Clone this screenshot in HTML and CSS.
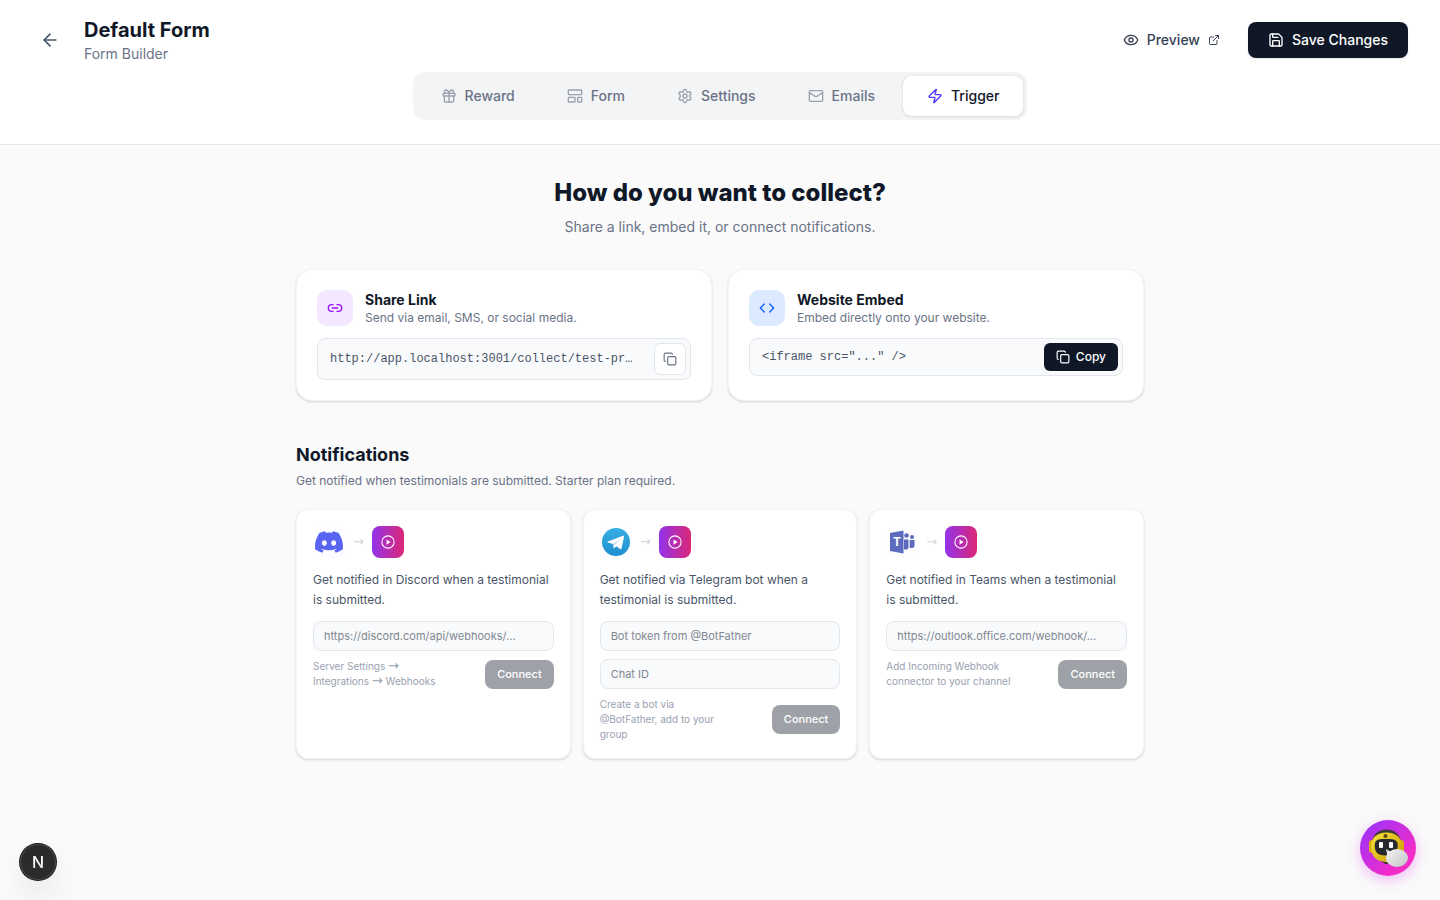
FILE: index.html
```html
<!DOCTYPE html>
<html lang="en">
<head>
    <meta charset="UTF-8">
    <meta name="viewport" content="width=device-width, initial-scale=1.0">
    <title>Default Form - Form Builder</title>
    <link rel="stylesheet" href="styles.css">
</head>
<body>
    <!-- shared icons -->
    <svg class="sprite" aria-hidden="true">
        <defs>
            <linearGradient id="telegram-bg" x1="0" y1="0" x2="0" y2="1">
                <stop offset="0" stop-color="#37aee2"/>
                <stop offset="1" stop-color="#1e8fd0"/>
            </linearGradient>
        </defs>
        <symbol id="icon-copy" viewBox="0 0 24 24">
            <rect width="14" height="14" x="8" y="8" rx="2"/>
            <path d="M4 16c-1.1 0-2-.9-2-2V4c0-1.1.9-2 2-2h10c1.1 0 2 .9 2 2"/>
        </symbol>
        <symbol id="icon-play" viewBox="0 0 24 24">
            <circle cx="12" cy="12" r="10.5" stroke-width="1.8"/>
            <path d="M9.5 7.5v9l7-4.5z" fill="currentColor" stroke="none"/>
        </symbol>
    </svg>

    <header class="header">
        <div class="header-row">
            <div class="header-left">
                <a href="#" class="back-btn" aria-label="Back">
                    <svg class="icon icon-20" viewBox="0 0 24 24"><path d="m12 19-7-7 7-7"/><path d="M19 12H5"/></svg>
                </a>
                <div>
                    <h1 class="page-title">Default Form</h1>
                    <p class="page-subtitle">Form Builder</p>
                </div>
            </div>
            <div class="header-right">
                <a href="#" class="preview-btn">
                    <svg class="icon icon-16" viewBox="0 0 24 24"><path d="M2.062 12.348a1 1 0 0 1 0-.696 10.75 10.75 0 0 1 19.876 0 1 1 0 0 1 0 .696 10.75 10.75 0 0 1-19.876 0"/><circle cx="12" cy="12" r="3"/></svg>
                    Preview
                    <svg class="icon icon-12" viewBox="0 0 24 24"><path d="M15 3h6v6"/><path d="M10 14 21 3"/><path d="M18 13v6a2 2 0 0 1-2 2H5a2 2 0 0 1-2-2V8a2 2 0 0 1 2-2h6"/></svg>
                </a>
                <button type="button" class="save-btn">
                    <svg class="icon icon-16" viewBox="0 0 24 24"><path d="M15.2 3a2 2 0 0 1 1.4.6l3.8 3.8a2 2 0 0 1 .6 1.4V19a2 2 0 0 1-2 2H5a2 2 0 0 1-2-2V5a2 2 0 0 1 2-2z"/><path d="M17 21v-7a1 1 0 0 0-1-1H8a1 1 0 0 0-1 1v7"/><path d="M7 3v4a1 1 0 0 0 1 1h7"/></svg>
                    Save Changes
                </button>
            </div>
        </div>

        <nav class="tabs">
            <button type="button" class="tab">
                <svg class="icon icon-16" viewBox="0 0 24 24"><rect x="3" y="8" width="18" height="4" rx="1"/><path d="M12 8v13"/><path d="M19 12v7a2 2 0 0 1-2 2H7a2 2 0 0 1-2-2v-7"/><path d="M7.5 8a2.5 2.5 0 0 1 0-5A4.8 8 0 0 1 12 8a4.8 8 0 0 1 4.5-5 2.5 2.5 0 0 1 0 5"/></svg>
                Reward
            </button>
            <button type="button" class="tab">
                <svg class="icon icon-16" viewBox="0 0 24 24"><rect x="2" y="3" width="20" height="7" rx="1"/><rect x="2" y="14" width="10" height="7" rx="1"/><rect x="16" y="14" width="6" height="7" rx="1"/></svg>
                Form
            </button>
            <button type="button" class="tab">
                <svg class="icon icon-16" viewBox="0 0 24 24"><path d="M12.22 2h-.44a2 2 0 0 0-2 2v.18a2 2 0 0 1-1 1.73l-.43.25a2 2 0 0 1-2 0l-.15-.08a2 2 0 0 0-2.73.73l-.22.38a2 2 0 0 0 .73 2.73l.15.1a2 2 0 0 1 1 1.72v.51a2 2 0 0 1-1 1.74l-.15.09a2 2 0 0 0-.73 2.73l.22.38a2 2 0 0 0 2.73.73l.15-.08a2 2 0 0 1 2 0l.43.25a2 2 0 0 1 1 1.73V20a2 2 0 0 0 2 2h.44a2 2 0 0 0 2-2v-.18a2 2 0 0 1 1-1.73l.43-.25a2 2 0 0 1 2 0l.15.08a2 2 0 0 0 2.73-.73l.22-.39a2 2 0 0 0-.73-2.73l-.15-.08a2 2 0 0 1-1-1.74v-.5a2 2 0 0 1 1-1.74l.15-.09a2 2 0 0 0 .73-2.73l-.22-.38a2 2 0 0 0-2.73-.73l-.15.08a2 2 0 0 1-2 0l-.43-.25a2 2 0 0 1-1-1.73V4a2 2 0 0 0-2-2z"/><circle cx="12" cy="12" r="3"/></svg>
                Settings
            </button>
            <button type="button" class="tab">
                <svg class="icon icon-16" viewBox="0 0 24 24"><rect x="2" y="4" width="20" height="16" rx="2"/><path d="m22 7-8.991 5.727a2 2 0 0 1-2.009 0L2 7"/></svg>
                Emails
            </button>
            <button type="button" class="tab active">
                <svg class="icon icon-16" viewBox="0 0 24 24"><path d="M4 14a1 1 0 0 1-.78-1.63l9.9-10.2a.5.5 0 0 1 .86.46l-1.92 6.02A1 1 0 0 0 13 10h7a1 1 0 0 1 .78 1.63l-9.9 10.2a.5.5 0 0 1-.86-.46l1.92-6.02A1 1 0 0 0 11 14z"/></svg>
                Trigger
            </button>
        </nav>
    </header>

    <main class="container">
        <div class="intro">
            <h2 class="intro-title">How do you want to collect?</h2>
            <p class="intro-text">Share a link, embed it, or connect notifications.</p>
        </div>

        <section class="collect-grid">
            <div class="collect-card">
                <div class="collect-head">
                    <span class="collect-icon purple">
                        <svg class="icon icon-16" viewBox="0 0 24 24"><path d="M9 17H7A5 5 0 0 1 7 7h2"/><path d="M15 7h2a5 5 0 1 1 0 10h-2"/><path d="M8 12h8"/></svg>
                    </span>
                    <div>
                        <h3 class="collect-title">Share Link</h3>
                        <p class="collect-text">Send via email, SMS, or social media.</p>
                    </div>
                </div>
                <div class="code-box">
                    <code>http://app.localhost:3001/collect/test-pr…</code>
                    <button type="button" class="copy-icon-btn" aria-label="Copy link">
                        <svg class="icon icon-14"><use href="#icon-copy"/></svg>
                    </button>
                </div>
            </div>

            <div class="collect-card">
                <div class="collect-head">
                    <span class="collect-icon blue">
                        <svg class="icon icon-16" viewBox="0 0 24 24"><path d="m16 18 6-6-6-6"/><path d="m8 6-6 6 6 6"/></svg>
                    </span>
                    <div>
                        <h3 class="collect-title">Website Embed</h3>
                        <p class="collect-text">Embed directly onto your website.</p>
                    </div>
                </div>
                <div class="code-box">
                    <code>&lt;iframe src="..." /&gt;</code>
                    <button type="button" class="copy-btn">
                        <svg class="icon icon-14"><use href="#icon-copy"/></svg>
                        Copy
                    </button>
                </div>
            </div>
        </section>

        <section class="notifications">
            <h2 class="section-title">Notifications</h2>
            <p class="section-text">Get notified when testimonials are submitted. Starter plan required.</p>

            <div class="notify-grid">
                <form class="notify-card">
                    <div class="logos">
                        <span class="logo">
                            <svg class="icon-28" viewBox="0 0 24 24" fill="#5865f2"><path d="M20.317 4.37a19.79 19.79 0 0 0-4.885-1.515.074.074 0 0 0-.079.037c-.21.375-.444.865-.608 1.25a18.27 18.27 0 0 0-5.487 0 12.64 12.64 0 0 0-.617-1.25.077.077 0 0 0-.079-.037A19.74 19.74 0 0 0 3.677 4.37a.07.07 0 0 0-.032.027C.533 9.046-.32 13.58.099 18.057a.082.082 0 0 0 .031.057 19.9 19.9 0 0 0 5.993 3.03.078.078 0 0 0 .084-.028c.462-.63.874-1.295 1.226-1.994a.076.076 0 0 0-.041-.106 13.1 13.1 0 0 1-1.872-.892.077.077 0 0 1-.008-.128c.126-.094.252-.192.372-.292a.074.074 0 0 1 .077-.01c3.928 1.793 8.18 1.793 12.062 0a.074.074 0 0 1 .078.01c.12.098.246.198.373.292a.077.077 0 0 1-.006.127 12.3 12.3 0 0 1-1.873.892.077.077 0 0 0-.041.107c.36.698.772 1.362 1.225 1.993a.076.076 0 0 0 .084.028 19.84 19.84 0 0 0 6.002-3.03.077.077 0 0 0 .032-.054c.5-5.177-.838-9.674-3.549-13.66a.061.061 0 0 0-.031-.03zM8.02 15.33c-1.183 0-2.157-1.085-2.157-2.419 0-1.333.956-2.419 2.157-2.419 1.21 0 2.176 1.096 2.157 2.42 0 1.333-.956 2.418-2.157 2.418zm7.975 0c-1.183 0-2.157-1.085-2.157-2.419 0-1.333.955-2.419 2.157-2.419 1.21 0 2.176 1.096 2.157 2.42 0 1.333-.946 2.418-2.157 2.418z"/></svg>
                        </span>
                        <span class="arrow">→</span>
                        <span class="app-logo"><svg class="icon icon-14"><use href="#icon-play"/></svg></span>
                    </div>
                    <p class="notify-text">Get notified in Discord when a testimonial is submitted.</p>
                    <div class="fields">
                        <input type="url" class="field" aria-label="Discord webhook URL" placeholder="https://discord.com/api/webhooks/...">
                        <div class="notify-foot">
                            <p class="hint">Server Settings <span class="hint-arrow">→</span> Integrations <span class="hint-arrow">→</span> Webhooks</p>
                            <button type="button" class="connect-btn" disabled>Connect</button>
                        </div>
                    </div>
                </form>

                <form class="notify-card">
                    <div class="logos">
                        <span class="logo">
                            <svg class="icon-28" viewBox="0 0 28 28">
                                <circle cx="14" cy="14" r="14" fill="url(#telegram-bg)"/>
                                <path d="M5.8 13.5 21 7.7c.7-.2 1.2.2 1 1.1l-2.5 11.7c-.2.8-.7 1-1.4.6l-3.8-2.9-1.9 1.9c-.5.4-.9.3-.9-.5l-.6-3.7-5-1.5c-.8-.3-.8-.7-.1-.9z" fill="#fff"/>
                                <path d="m10.9 15.9 8.4-5.5-6.7 6.7-.7 3.2z" fill="#c8daea"/>
                            </svg>
                        </span>
                        <span class="arrow">→</span>
                        <span class="app-logo"><svg class="icon icon-14"><use href="#icon-play"/></svg></span>
                    </div>
                    <p class="notify-text">Get notified via Telegram bot when a testimonial is submitted.</p>
                    <div class="fields">
                        <input type="text" class="field" aria-label="Bot token" placeholder="Bot token from @BotFather">
                        <input type="text" class="field" aria-label="Chat ID" placeholder="Chat ID">
                        <div class="notify-foot">
                            <p class="hint">Create a bot via @BotFather, add to your group</p>
                            <button type="button" class="connect-btn" disabled>Connect</button>
                        </div>
                    </div>
                </form>

                <form class="notify-card">
                    <div class="logos">
                        <span class="logo">
                            <svg class="icon-28" viewBox="0 0 28 28">
                                <g fill="#5c6bc0">
                                    <circle cx="18.5" cy="7.5" r="2.3"/>
                                    <circle cx="24" cy="9" r="2"/>
                                    <path d="M16 11.5h4.5V19a2.5 2.5 0 0 1-2.5 2.5h-2z"/>
                                    <path d="M21.7 12h4.8v5.5a2.6 2.6 0 0 1-2.8 2.5h-2z"/>
                                    <path d="M2 5 15.5 2.5v23L2 23z"/>
                                </g>
                                <text class="teams-letter" x="9" y="18" text-anchor="middle">T</text>
                            </svg>
                        </span>
                        <span class="arrow">→</span>
                        <span class="app-logo"><svg class="icon icon-14"><use href="#icon-play"/></svg></span>
                    </div>
                    <p class="notify-text">Get notified in Teams when a testimonial is submitted.</p>
                    <div class="fields">
                        <input type="url" class="field" aria-label="Teams webhook URL" placeholder="https://outlook.office.com/webhook/...">
                        <div class="notify-foot">
                            <p class="hint">Add Incoming Webhook connector to your channel</p>
                            <button type="button" class="connect-btn" disabled>Connect</button>
                        </div>
                    </div>
                </form>
            </div>
        </section>
    </main>

    <button type="button" class="dev-badge" aria-label="Developer tools">
        <svg viewBox="0 0 36 36">
            <defs>
                <linearGradient id="dev-fade" x1="0" y1="0" x2="0" y2="1">
                    <stop offset=".5" stop-color="#fff"/>
                    <stop offset="1" stop-color="#ccc"/>
                </linearGradient>
            </defs>
            <text class="dev-letter" x="18" y="24" text-anchor="middle" fill="url(#dev-fade)">N</text>
        </svg>
    </button>

    <button type="button" class="chat-btn" aria-label="Open chat">
        <svg viewBox="0 0 56 56">
            <defs>
                <linearGradient id="bot-head" x1="0" y1="0" x2="1" y2="1">
                    <stop offset="0" stop-color="#f8e33a"/>
                    <stop offset="1" stop-color="#c99a08"/>
                </linearGradient>
                <linearGradient id="bot-bubble" x1="0" y1="0" x2="1" y2="1">
                    <stop offset="0" stop-color="#f4f4f4"/>
                    <stop offset="1" stop-color="#c4c4c8"/>
                </linearGradient>
            </defs>
            <path d="M12 22c1-8 7-12.5 14.5-12.5S40 14 41 22z" fill="#3d3b36"/>
            <rect x="9" y="20" width="6" height="13" rx="3" fill="#d9a90c"/>
            <rect x="38" y="20" width="6" height="13" rx="3" fill="#d9a90c"/>
            <path d="M11 26c0-8 6-13.5 15.5-13.5S42 18 42 26c0 9-4 16-15.5 16S11 35 11 26z" fill="url(#bot-head)"/>
            <path d="M20 40c4 3 9 3 13 0l-5 4h-3z" fill="#3d3b36"/>
            <circle cx="25.5" cy="16" r="2" fill="#5a4a1a"/>
            <path d="M15 23c1-4 5-4 11-4s10 0 11.5 4c1 8-2 12.5-11.5 12.5S14 31 15 23z" fill="#292a30"/>
            <rect x="19" y="22" width="4" height="6" rx="1" fill="#fff"/>
            <rect x="29" y="22" width="4" height="6" rx="1" fill="#fff"/>
            <path d="m26 29 5 3-3 6z" fill="#eee"/>
            <ellipse cx="37" cy="38" rx="11" ry="9" fill="url(#bot-bubble)"/>
        </svg>
    </button>
</body>
</html>
```

FILE: styles.css
```css
* {
    box-sizing: border-box;
    margin: 0;
    padding: 0;
}
body {
    min-height: 100vh;
    background: #fafafa;
    color: #101828;
    font-family: Inter, 'Liberation Sans', sans-serif;
    font-size: 14px;
    line-height: 20px;
}
button, input {
    font: inherit;
}
button {
    border: none;
    cursor: pointer;
}
a {
    color: inherit;
    text-decoration: none;
}
.sprite {
    position: absolute;
    width: 0;
    height: 0;
}

/* icons */
.icon {
    flex-shrink: 0;
    fill: none;
    stroke: currentColor;
    stroke-width: 2;
    stroke-linecap: round;
    stroke-linejoin: round;
}
.icon-12 {
    width: 12px;
    height: 12px;
}
.icon-14 {
    width: 14px;
    height: 14px;
}
.icon-16 {
    width: 16px;
    height: 16px;
}
.icon-20 {
    width: 20px;
    height: 20px;
}
.icon-28 {
    width: 28px;
    height: 28px;
}

/* header */
.header {
    display: flex;
    flex-direction: column;
    gap: 8px;
    padding: 16px 32px 24px;
    background: #fff;
    border-bottom: 1px solid #e5e7eb;
}
.header-row {
    display: flex;
    justify-content: space-between;
    align-items: center;
}
.header-left {
    display: flex;
    align-items: center;
    gap: 16px;
}
.back-btn {
    display: flex;
    padding: 8px;
    color: #4a5568;
}
.page-title {
    font-size: 20px;
    line-height: 28px;
    font-weight: 700;
}
.page-subtitle {
    color: #6a7386;
}
.header-right {
    display: flex;
    align-items: center;
    gap: 12px;
}
.preview-btn {
    display: flex;
    align-items: center;
    gap: 8px;
    padding: 8px 16px;
    color: #364153;
    font-weight: 500;
}
.save-btn {
    display: flex;
    align-items: center;
    gap: 8px;
    padding: 8px 20px;
    border-radius: 8px;
    background: #101828;
    color: #fff;
    font-weight: 500;
    box-shadow: 0 1px 2px rgba(0, 0, 0, 0.1);
}

/* tabs */
.tabs {
    display: flex;
    gap: 4px;
    align-self: center;
    padding: 4px;
    border-radius: 12px;
    background: #f3f4f6;
}
.tab {
    display: flex;
    align-items: center;
    gap: 8px;
    padding: 10px 24px;
    border-radius: 8px;
    background: transparent;
    color: #6a7386;
    font-weight: 500;
}
.tab .icon {
    color: #99a1af;
}
.tab.active {
    background: #fff;
    color: #101828;
    box-shadow: 0 1px 3px rgba(0, 0, 0, 0.1), 0 0 1px rgba(15, 23, 43, 0.2);
}
.tab.active .icon {
    color: #4f39f6;
}

.container {
    max-width: 896px;
    margin: 0 auto;
    padding: 32px 24px;
}
.intro {
    margin-bottom: 32px;
    text-align: center;
}
.intro-title {
    margin-bottom: 8px;
    font-size: 24px;
    line-height: 32px;
    font-weight: 800;
}
.intro-text {
    color: #6a7386;
}

/* collect cards */
.collect-grid {
    display: grid;
    grid-template-columns: 1fr 1fr;
    gap: 16px;
    margin-bottom: 40px;
}
.collect-card {
    padding: 20px;
    border: 1px solid #f3f4f6;
    border-radius: 16px;
    background: #fff;
    box-shadow: 0 1px 3px rgba(0, 0, 0, 0.1), 0 1px 2px rgba(0, 0, 0, 0.06);
}
.collect-head {
    display: flex;
    align-items: center;
    gap: 12px;
    margin-bottom: 12px;
}
.collect-icon {
    display: flex;
    padding: 10px;
    border-radius: 10px;
}
.purple {
    background: #f3e8ff;
    color: #9810fa;
}
.blue {
    background: #dbeafe;
    color: #155dfc;
}
.collect-title {
    font-size: 14px;
    font-weight: 700;
}
.collect-text {
    color: #6a7386;
    font-size: 12px;
    line-height: 16px;
}
.code-box {
    display: flex;
    justify-content: space-between;
    align-items: center;
    gap: 8px;
    padding: 4px 4px 4px 12px;
    border: 1px solid #e2e6ed;
    border-radius: 8px;
    background: #f9fafb;
}
.code-box code {
    overflow: hidden;
    color: #4a5568;
    font-family: 'Liberation Mono', monospace;
    font-size: 12px;
    line-height: 16px;
    white-space: nowrap;
    text-overflow: ellipsis;
}
.copy-icon-btn {
    display: flex;
    padding: 8px;
    border: 1px solid #e2e6ed;
    border-radius: 6px;
    background: #fff;
    color: #6a7386;
}
.copy-btn {
    display: flex;
    align-items: center;
    gap: 6px;
    padding: 6px 12px;
    border-radius: 6px;
    background: #101828;
    color: #fff;
    font-size: 12px;
    line-height: 16px;
    font-weight: 500;
}

/* notifications */
.section-title {
    margin-bottom: 4px;
    font-size: 18px;
    line-height: 28px;
    font-weight: 700;
}
.section-text {
    margin-bottom: 20px;
    color: #6a7386;
    font-size: 12px;
    line-height: 16px;
}
.notify-grid {
    display: grid;
    grid-template-columns: repeat(3, 1fr);
    gap: 12px;
}
.notify-card {
    padding: 16px;
    border: 1px solid #f3f4f6;
    border-radius: 12px;
    background: #fff;
    box-shadow: 0 1px 3px rgba(0, 0, 0, 0.1), 0 1px 2px rgba(0, 0, 0, 0.06);
}
.logos {
    display: flex;
    align-items: center;
    gap: 8px;
    margin-bottom: 12px;
}
.logo {
    display: flex;
    padding: 2px;
    border-radius: 8px;
    background: #fdfdff;
}
.arrow {
    color: #d1d5dc;
    font-family: 'DejaVu Sans', sans-serif;
    font-size: 13px;
}
.app-logo {
    display: flex;
    padding: 9px;
    border-radius: 8px;
    background: linear-gradient(to right, #9333ea, #db2777);
    color: #fff;
}
.teams-letter {
    fill: #fff;
    font-size: 12px;
    font-weight: 700;
}
.notify-text {
    margin-bottom: 11px;
    color: #4a5568;
    font-size: 12px;
}
.fields {
    display: flex;
    flex-direction: column;
    gap: 8px;
}
.field {
    width: 100%;
    height: 30px;
    padding: 0 10px;
    border: 1px solid #e2e6ed;
    border-radius: 8px;
    background: #f9fafb;
    color: #101828;
    font-size: 11px;
}
.field::placeholder {
    color: #808792;
}
.notify-foot {
    display: flex;
    justify-content: space-between;
    align-items: center;
}
.hint {
    max-width: 130px;
    color: #99a1af;
    font-size: 10px;
    line-height: 15px;
}
.hint-arrow {
    font-family: 'DejaVu Sans', sans-serif;
    font-size: 13px;
    line-height: 1;
}
.connect-btn {
    padding: 6px 12px;
    border-radius: 8px;
    background: #101828;
    color: #fff;
    font-size: 11px;
    line-height: 17px;
    font-weight: 500;
    opacity: 0.4;
}

/* floating buttons */
.dev-badge {
    position: fixed;
    left: 20px;
    bottom: 20px;
    width: 36px;
    height: 36px;
    border-radius: 50%;
    background: #2b2b2b;
    box-shadow: 0 0 0 1px #171717, inset 0 0 0 1px #4a4a4a, 0 16px 32px -8px rgba(0, 0, 0, 0.24);
}
.dev-badge svg,
.chat-btn svg {
    display: block;
}
.dev-letter {
    font-size: 16px;
    font-weight: 500;
}
.chat-btn {
    position: fixed;
    right: 24px;
    bottom: 24px;
    width: 56px;
    height: 56px;
    border-radius: 50%;
    background: linear-gradient(135deg, #9333ff, #f32cc8 75%);
    box-shadow: 0 4px 14px rgba(217, 70, 239, 0.35);
}
```
